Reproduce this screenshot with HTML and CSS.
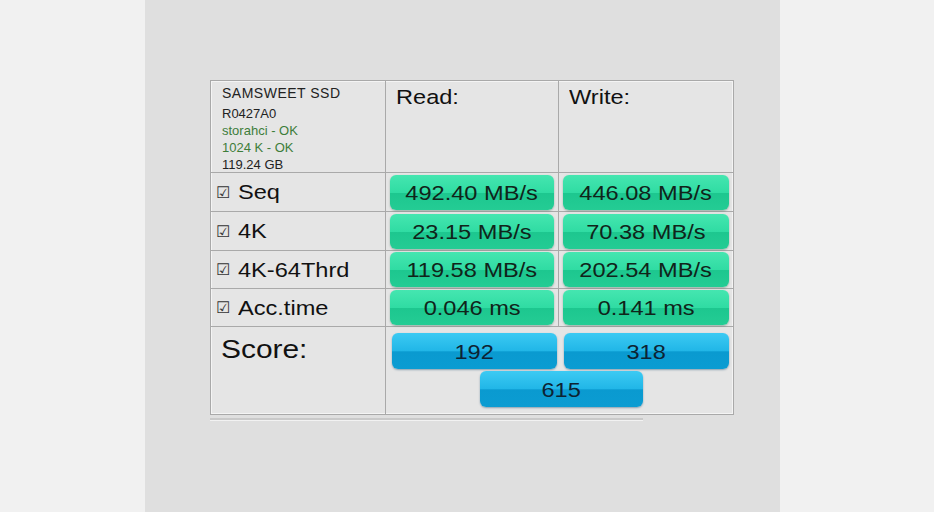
FILE: index.html
```html
<!DOCTYPE html>
<html lang="en">
<head>
    <meta charset="UTF-8">
    <title>AS SSD Benchmark</title>
    <link rel="stylesheet" href="styles.css">
</head>
<body>
    <div class="panel">
        <div class="bench">
            <div class="cell info">
                <div class="drive">SAMSWEET SSD</div>
                <div>R0427A0</div>
                <div class="ok">storahci - OK</div>
                <div class="ok">1024 K - OK</div>
                <div>119.24 GB</div>
            </div>
            <div class="cell head"><span class="wide">Read:</span></div>
            <div class="cell head"><span class="wide">Write:</span></div>

            <div class="cell label"><span class="check">&#9745;</span><span class="wide">Seq</span></div>
            <div class="cell val"><span class="bar"><span class="wide">492.40 MB/s</span></span></div>
            <div class="cell val"><span class="bar"><span class="wide">446.08 MB/s</span></span></div>

            <div class="cell label"><span class="check">&#9745;</span><span class="wide">4K</span></div>
            <div class="cell val"><span class="bar"><span class="wide">23.15 MB/s</span></span></div>
            <div class="cell val"><span class="bar"><span class="wide">70.38 MB/s</span></span></div>

            <div class="cell label"><span class="check">&#9745;</span><span class="wide">4K-64Thrd</span></div>
            <div class="cell val"><span class="bar"><span class="wide">119.58 MB/s</span></span></div>
            <div class="cell val"><span class="bar"><span class="wide">202.54 MB/s</span></span></div>

            <div class="cell label"><span class="check">&#9745;</span><span class="wide">Acc.time</span></div>
            <div class="cell val"><span class="bar"><span class="wide">0.046 ms</span></span></div>
            <div class="cell val"><span class="bar"><span class="wide">0.141 ms</span></span></div>

            <div class="cell score-label"><span class="wide">Score:</span></div>
            <div class="cell scores">
                <div class="score-row">
                    <span class="score"><span class="wide">192</span></span>
                    <span class="score"><span class="wide">318</span></span>
                </div>
                <div class="score-total">
                    <span class="score"><span class="wide">615</span></span>
                </div>
            </div>
        </div>
        <div class="progress"></div>
    </div>
</body>
</html>
```

FILE: styles.css
```css
body {
    margin: 0;
    background-color: #f1f1f1;
    font-family: "Liberation Sans", Arial, sans-serif;
    color: #111;
}
.panel {
    margin-left: 145px;
    width: 635px;
    height: 512px;
    background-color: #dfdfdf;
    padding: 80px 0 0 65px;
    box-sizing: border-box;
}
.bench {
    display: grid;
    grid-template-columns: 175px 173px 174px;
    grid-template-rows: 92px 39px 39px 38px 38px 87px;
    width: 524px;
    background-color: #e5e5e5;
    border: 1px solid #a9a9a9;
    box-shadow: inset 0 0 0 1px #f4f4f4;
    box-sizing: border-box;
}
.cell {
    border-right: 1px solid #a9a9a9;
    border-bottom: 1px solid #a9a9a9;
    box-sizing: border-box;
}
.cell:nth-child(3n) {
    border-right: none;
}
/* the screenshot is stretched sideways a little */
.wide {
    display: inline-block;
    transform: scaleX(1.15);
    transform-origin: left center;
}
.bar .wide,
.score .wide {
    transform-origin: center;
}
.info {
    padding: 3px 0 0 11px;
    font-size: 13px;
    line-height: 17px;
    color: #222;
}
.info .drive {
    font-size: 14px;
    line-height: 18px;
    margin-bottom: 3px;
    letter-spacing: 0.5px;
}
.info .ok {
    color: #3d7d3a;
}
.head {
    font-size: 20.5px;
    padding: 4px 0 0 10px;
}
.label {
    display: flex;
    align-items: center;
    font-size: 20.5px;
    padding-left: 5px;
}
.check {
    font-size: 16px;
    margin-right: 8px;
    color: #333;
}
.val {
    display: flex;
    align-items: center;
    padding: 0 4px;
}
.bar {
    flex: 1;
    height: 35px;
    line-height: 36px;
    text-align: center;
    font-size: 20.5px;
    color: #10241a;
    border-radius: 6px;
    background: linear-gradient(#45e6b0 0%, #30dca3 50%, #1dc78f 52%, #24cc94 100%);
    box-shadow: 0 1px 2px rgba(0, 80, 50, 0.35);
}
.score-label {
    font-size: 26px;
    padding: 7px 0 0 10px;
    border-right: 1px solid #a9a9a9;
    border-bottom: none;
}
.scores {
    grid-column: 2 / 4;
    border: none;
    padding: 6px 4px 0 6px;
    display: flex;
    flex-direction: column;
    gap: 2px;
}
.score-row {
    display: flex;
    gap: 7px;
}
.score-row .score {
    flex: 1;
}
.score-total {
    display: flex;
    justify-content: center;
    padding-left: 1px;
}
.score-total .score {
    width: 163px;
}
.score {
    display: block;
    height: 36px;
    line-height: 38px;
    text-align: center;
    font-size: 20.5px;
    color: #0d2333;
    border-radius: 6px;
    background: linear-gradient(#3ccaf3 0%, #21b6e7 50%, #0a9ad0 52%, #0b9cd2 100%);
    box-shadow: 0 1px 2px rgba(0, 60, 100, 0.4);
}
.progress {
    width: 433px;
    height: 2px;
    margin-top: 3px;
    background-color: #c9c9c9;
    border-bottom: 1px solid #f2f2f2;
}
```
